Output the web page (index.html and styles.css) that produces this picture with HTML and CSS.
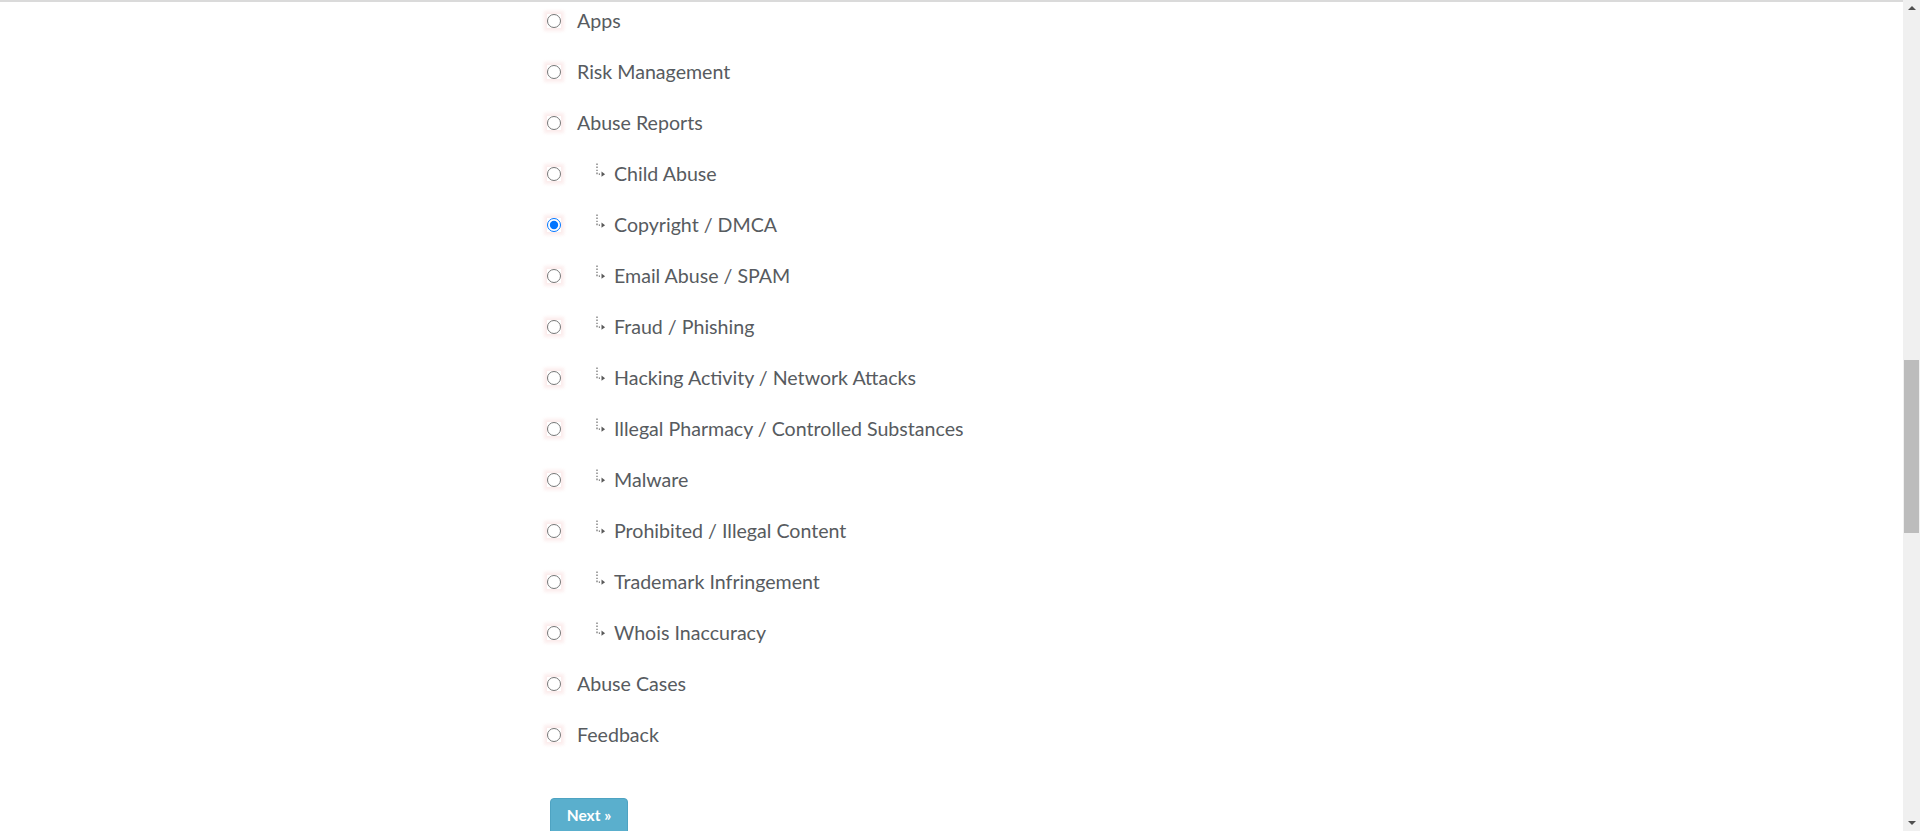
FILE: index.html
```html
<!DOCTYPE html>
<html>
<head>
<meta charset="utf-8">
<link rel="stylesheet" href="styles.css">
</head>
<body>
<div class="shell">
  <div class="page">
    <form class="form">
      <ul class="options">
        <li class="row"><input type="radio" name="cat" class="radio"><span class="label">Apps</span></li>
        <li class="row"><input type="radio" name="cat" class="radio"><span class="label">Risk Management</span></li>
        <li class="row"><input type="radio" name="cat" class="radio"><span class="label">Abuse Reports</span></li>
        <li class="row sub"><input type="radio" name="cat" class="radio"><span class="label"><svg class="arrow" viewBox="0 0 14 14" width="14" height="14"><path d="M3 0.5v1.4M3 3.6v1.4M3 6.7v1.4M3 9.6v1.6M4.8 11.2h1.2" stroke="#6a6a6a" stroke-width="1.2" fill="none"/><path d="M7.5 8.6l3.6 2.6-3.6 2.6z" fill="#5a5a5a"/></svg>Child Abuse</span></li>
        <li class="row sub"><input type="radio" name="cat" class="radio" checked><span class="label"><svg class="arrow" viewBox="0 0 14 14" width="14" height="14"><path d="M3 0.5v1.4M3 3.6v1.4M3 6.7v1.4M3 9.6v1.6M4.8 11.2h1.2" stroke="#6a6a6a" stroke-width="1.2" fill="none"/><path d="M7.5 8.6l3.6 2.6-3.6 2.6z" fill="#5a5a5a"/></svg>Copyright / DMCA</span></li>
        <li class="row sub"><input type="radio" name="cat" class="radio"><span class="label"><svg class="arrow" viewBox="0 0 14 14" width="14" height="14"><path d="M3 0.5v1.4M3 3.6v1.4M3 6.7v1.4M3 9.6v1.6M4.8 11.2h1.2" stroke="#6a6a6a" stroke-width="1.2" fill="none"/><path d="M7.5 8.6l3.6 2.6-3.6 2.6z" fill="#5a5a5a"/></svg>Email Abuse / SPAM</span></li>
        <li class="row sub"><input type="radio" name="cat" class="radio"><span class="label"><svg class="arrow" viewBox="0 0 14 14" width="14" height="14"><path d="M3 0.5v1.4M3 3.6v1.4M3 6.7v1.4M3 9.6v1.6M4.8 11.2h1.2" stroke="#6a6a6a" stroke-width="1.2" fill="none"/><path d="M7.5 8.6l3.6 2.6-3.6 2.6z" fill="#5a5a5a"/></svg>Fraud / Phishing</span></li>
        <li class="row sub"><input type="radio" name="cat" class="radio"><span class="label"><svg class="arrow" viewBox="0 0 14 14" width="14" height="14"><path d="M3 0.5v1.4M3 3.6v1.4M3 6.7v1.4M3 9.6v1.6M4.8 11.2h1.2" stroke="#6a6a6a" stroke-width="1.2" fill="none"/><path d="M7.5 8.6l3.6 2.6-3.6 2.6z" fill="#5a5a5a"/></svg>Hacking Activity / Network Attacks</span></li>
        <li class="row sub"><input type="radio" name="cat" class="radio"><span class="label"><svg class="arrow" viewBox="0 0 14 14" width="14" height="14"><path d="M3 0.5v1.4M3 3.6v1.4M3 6.7v1.4M3 9.6v1.6M4.8 11.2h1.2" stroke="#6a6a6a" stroke-width="1.2" fill="none"/><path d="M7.5 8.6l3.6 2.6-3.6 2.6z" fill="#5a5a5a"/></svg>Illegal Pharmacy / Controlled Substances</span></li>
        <li class="row sub"><input type="radio" name="cat" class="radio"><span class="label"><svg class="arrow" viewBox="0 0 14 14" width="14" height="14"><path d="M3 0.5v1.4M3 3.6v1.4M3 6.7v1.4M3 9.6v1.6M4.8 11.2h1.2" stroke="#6a6a6a" stroke-width="1.2" fill="none"/><path d="M7.5 8.6l3.6 2.6-3.6 2.6z" fill="#5a5a5a"/></svg>Malware</span></li>
        <li class="row sub"><input type="radio" name="cat" class="radio"><span class="label"><svg class="arrow" viewBox="0 0 14 14" width="14" height="14"><path d="M3 0.5v1.4M3 3.6v1.4M3 6.7v1.4M3 9.6v1.6M4.8 11.2h1.2" stroke="#6a6a6a" stroke-width="1.2" fill="none"/><path d="M7.5 8.6l3.6 2.6-3.6 2.6z" fill="#5a5a5a"/></svg>Prohibited / Illegal Content</span></li>
        <li class="row sub"><input type="radio" name="cat" class="radio"><span class="label"><svg class="arrow" viewBox="0 0 14 14" width="14" height="14"><path d="M3 0.5v1.4M3 3.6v1.4M3 6.7v1.4M3 9.6v1.6M4.8 11.2h1.2" stroke="#6a6a6a" stroke-width="1.2" fill="none"/><path d="M7.5 8.6l3.6 2.6-3.6 2.6z" fill="#5a5a5a"/></svg>Trademark Infringement</span></li>
        <li class="row sub"><input type="radio" name="cat" class="radio"><span class="label"><svg class="arrow" viewBox="0 0 14 14" width="14" height="14"><path d="M3 0.5v1.4M3 3.6v1.4M3 6.7v1.4M3 9.6v1.6M4.8 11.2h1.2" stroke="#6a6a6a" stroke-width="1.2" fill="none"/><path d="M7.5 8.6l3.6 2.6-3.6 2.6z" fill="#5a5a5a"/></svg>Whois Inaccuracy</span></li>
        <li class="row"><input type="radio" name="cat" class="radio"><span class="label">Abuse Cases</span></li>
        <li class="row"><input type="radio" name="cat" class="radio"><span class="label">Feedback</span></li>
      </ul>
      <button type="button" class="next">Next &raquo;</button>
    </form>
  </div>
  <div class="scrollbar">
    <div class="sb-arrow sb-up"></div>
    <div class="sb-track"><div class="sb-thumb"></div></div>
    <div class="sb-arrow sb-down"></div>
  </div>
</div>
</body>
</html>
```
FILE: styles.css
```css
html, body {
  margin: 0;
  padding: 0;
  background: #fff;
}
body {
  font-family: "Lato", "Open Sans", sans-serif;
  color: #575b60;
  overflow: hidden;
}
.shell {
  display: flex;
  height: 831px;
  overflow: hidden;
}
.page {
  flex: 1;
  border-top: 2px solid #dadada;
  overflow: hidden;
}
.form {
  margin: 0;
  padding-left: 547px;
}
.options {
  list-style: none;
  margin: -7px 0 0 0;
  padding: 0;
}
.row {
  display: flex;
  align-items: center;
  height: 51px;
}
.radio {
  width: 14px;
  height: 14px;
  margin: 0;
  box-shadow: 0 0 3px 3px rgba(235, 140, 140, 0.16);
  accent-color: #0075ff;
}
.label {
  display: flex;
  align-items: center;
  margin-left: 16px;
  font-size: 19.6px;
  line-height: 24px;
}
.sub .label {
  padding-left: 17px;
}
.arrow {
  margin-right: 6px;
  margin-top: -7px;
}
.next {
  margin-top: 38px;
  margin-left: 3px;
  width: 78px;
  height: 38px;
  background: #5aafcd;
  border: 1px solid #4ea3c2;
  border-radius: 4px;
  color: #fff;
  font-family: "Lato", "Open Sans", sans-serif;
  font-weight: 700;
  font-size: 15.5px;
  padding: 0 0 4px 0;
}
.scrollbar {
  width: 17px;
  background: #f0f0f0;
  display: flex;
  flex-direction: column;
  align-items: center;
}
.sb-arrow {
  width: 0;
  height: 0;
  border-left: 4px solid transparent;
  border-right: 4px solid transparent;
  margin: 6px 0;
}
.sb-up {
  border-bottom: 4px solid #505050;
}
.sb-down {
  border-top: 4px solid #505050;
}
.sb-track {
  flex: 1;
  width: 100%;
  display: flex;
  flex-direction: column;
  align-items: center;
}
.sb-thumb {
  margin-top: 344px;
  width: 15px;
  height: 173px;
  background: #bcbcbc;
}
```
